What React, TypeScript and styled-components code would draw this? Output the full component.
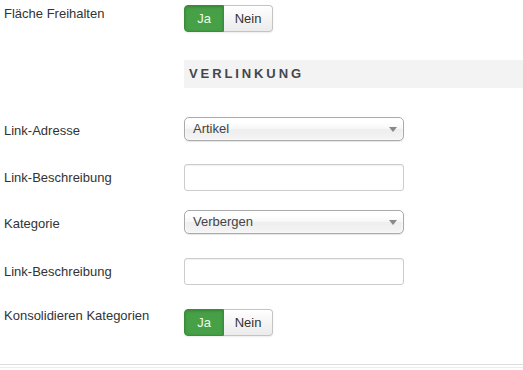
import styled, { createGlobalStyle } from 'styled-components'

const Global = createGlobalStyle`
	html, body {
		margin: 0;
		padding: 0;
		background: #fff;
	}
	body {
		font-family: "Liberation Sans", Arial, sans-serif;
		font-size: 13px;
		line-height: 18px;
		color: #333;
	}
`

const Form = styled.div`
	width: 523px;
	height: 370px;
	padding-top: 5px;
	box-sizing: border-box;
	overflow: hidden;
`

const Row = styled.div<{ $mt?: number }>`
	display: flex;
	align-items: flex-start;
	margin-top: ${p => p.$mt ?? 0}px;
`

const Label = styled.label<{ $pt?: number }>`
	width: 180px;
	padding-left: 4px;
	padding-top: ${p => p.$pt ?? 0}px;
	flex-shrink: 0;
	color: #333;
`

const Controls = styled.div<{ $pt?: number }>`
	padding-top: ${p => p.$pt ?? 0}px;
	flex: 1;
`

const Toggle = styled.div`
	display: inline-flex;
	height: 27px;
	border-radius: 4px;
	box-shadow: 0 1px 2px rgba(0, 0, 0, 0.08);
`

const Seg = styled.span<{ $on?: boolean }>`
	display: flex;
	align-items: center;
	justify-content: center;
	box-sizing: border-box;
	height: 27px;
	width: ${p => (p.$on ? 40 : 49)}px;
	font-size: 13px;
	color: ${p => (p.$on ? '#eef8ea' : '#333')};
	background: ${p => (p.$on ? '#46a046' : 'linear-gradient(#ffffff, #ebebeb)')};
	border: 1px solid ${p => (p.$on ? '#3c8a3c' : '#c4c4c4')};
	border-left-width: ${p => (p.$on ? 1 : 0)}px;
	border-radius: ${p => (p.$on ? '4px 0 0 4px' : '0 4px 4px 0')};
	box-shadow: ${p => (p.$on ? 'inset 0 1px 3px rgba(0,0,0,0.2)' : 'inset 0 1px 0 #fff')};
`

const Band = styled.div`
	margin: 28px 0 0 184px;
	height: 28px;
	background: #f3f3f3;
	display: flex;
	align-items: center;
	padding-left: 5px;
	font-weight: bold;
	font-size: 13px;
	letter-spacing: 2.9px;
	color: #45454d;
`

const Select = styled.div`
	position: relative;
	box-sizing: border-box;
	width: 220px;
	height: 24px;
	border: 1px solid #aaa;
	border-radius: 5px;
	background: linear-gradient(#ffffff 20%, #f6f6f6 50%, #eeeeee 52%, #f4f4f4 100%);
	box-shadow: inset 0 0 3px #fff, 0 1px 1px rgba(0, 0, 0, 0.1);
	display: flex;
	align-items: center;
	padding-left: 8px;
	color: #444;
`

const Caret = styled.span`
	position: absolute;
	right: 6px;
	top: 9px;
	width: 0;
	height: 0;
	border-left: 4px solid transparent;
	border-right: 4px solid transparent;
	border-top: 5px solid #888;
`

const Input = styled.div`
	box-sizing: border-box;
	width: 220px;
	height: 27px;
	border: 1px solid #ccc;
	border-radius: 3px;
	background: #fff;
	box-shadow: inset 0 1px 1px rgba(0, 0, 0, 0.06);
`

const Rule = styled.div`
	margin-top: 28px;
	height: 4px;
	box-sizing: border-box;
	border-top: 1px solid #dedede;
	border-bottom: 1px solid #ececec;
`

const YesNo = () => (
	<Toggle>
		<Seg $on>Ja</Seg>
		<Seg>Nein</Seg>
	</Toggle>
)

const App = () => {
	return (
		<>
			<Global />
			<Form>
				<Row>
					<Label>Fläche Freihalten</Label>
					<Controls><YesNo /></Controls>
				</Row>
				<Band>VERLINKUNG</Band>
				<Row $mt={29}>
					<Label $pt={5}>Link-Adresse</Label>
					<Controls>
						<Select>Artikel<Caret /></Select>
					</Controls>
				</Row>
				<Row $mt={23}>
					<Label $pt={5}>Link-Beschreibung</Label>
					<Controls><Input /></Controls>
				</Row>
				<Row $mt={19}>
					<Label $pt={5}>Kategorie</Label>
					<Controls>
						<Select>Verbergen<Caret /></Select>
					</Controls>
				</Row>
				<Row $mt={24}>
					<Label $pt={5}>Link-Beschreibung</Label>
					<Controls><Input /></Controls>
				</Row>
				<Row $mt={21}>
					<Label $pt={1}>Konsolidieren Kategorien</Label>
					<Controls $pt={3}><YesNo /></Controls>
				</Row>
				<Rule />
			</Form>
		</>
	)
}

export default App
